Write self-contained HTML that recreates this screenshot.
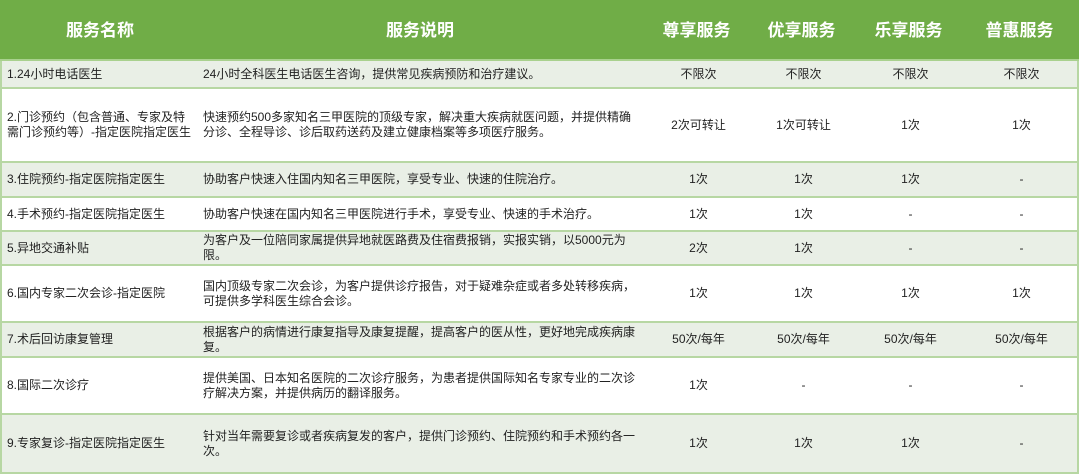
<!DOCTYPE html>
<html><head><meta charset="utf-8"><style>
*{margin:0;padding:0;box-sizing:border-box}
body{width:1080px;height:476px;background:#fff;font-family:"Liberation Sans","Noto Sans CJK SC",sans-serif;color:#222;position:relative;overflow:hidden}
.hd{position:absolute;left:0;top:0;width:1079px;height:61px;background:#70ad47;border-bottom:2px solid #a9d18e}
.hd div{position:absolute;top:0;height:61px;line-height:61px;color:#fff;font-weight:bold;font-size:17px;text-align:center}
.r{position:absolute;left:0;width:1079px;border-bottom:2px solid #b7d7a3;border-left:2px solid #b7d7a3;border-right:2px solid #b7d7a3;font-size:12px;line-height:15px}
.g{background:#e9efe6}
.r div{position:absolute;top:0;height:100%;display:flex;align-items:center}
.c1{left:5px;width:190px}
.c2{left:201px;width:440px}
.c3,.c4,.c5,.c6{justify-content:center;text-align:center}
.c3{left:645px;width:103px}.c4{left:748px;width:107px}.c5{left:855px;width:107px}.c6{left:962px;width:115px}
</style></head><body>
<div class="hd">
<div style="left:0;width:200px">服务名称</div>
<div style="left:200px;width:440px">服务说明</div>
<div style="left:645px;width:103px">尊享服务</div>
<div style="left:748px;width:107px">优享服务</div>
<div style="left:855px;width:107px">乐享服务</div>
<div style="left:962px;width:115px">普惠服务</div>
</div>

<div class="r g" style="top:61px;height:28px"><div class="c1">1.24小时电话医生</div><div class="c2">24小时全科医生电话医生咨询，提供常见疾病预防和治疗建议。</div><div class="c3">不限次</div><div class="c4">不限次</div><div class="c5">不限次</div><div class="c6">不限次</div></div>

<div class="r" style="top:89px;height:74px"><div class="c1">2.门诊预约（包含普通、专家及特<br>需门诊预约等）-指定医院指定医生</div><div class="c2">快速预约500多家知名三甲医院的顶级专家，解决重大疾病就医问题，并提供精确<br>分诊、全程导诊、诊后取药送药及建立健康档案等多项医疗服务。</div><div class="c3">2次可转让</div><div class="c4">1次可转让</div><div class="c5">1次</div><div class="c6">1次</div></div>

<div class="r g" style="top:163px;height:35px"><div class="c1">3.住院预约-指定医院指定医生</div><div class="c2">协助客户快速入住国内知名三甲医院，享受专业、快速的住院治疗。</div><div class="c3">1次</div><div class="c4">1次</div><div class="c5">1次</div><div class="c6">-</div></div>

<div class="r" style="top:198px;height:34px"><div class="c1">4.手术预约-指定医院指定医生</div><div class="c2">协助客户快速在国内知名三甲医院进行手术，享受专业、快速的手术治疗。</div><div class="c3">1次</div><div class="c4">1次</div><div class="c5">-</div><div class="c6">-</div></div>

<div class="r g" style="top:232px;height:34px"><div class="c1">5.异地交通补贴</div><div class="c2">为客户及一位陪同家属提供异地就医路费及住宿费报销，实报实销，以5000元为<br>限。</div><div class="c3">2次</div><div class="c4">1次</div><div class="c5">-</div><div class="c6">-</div></div>

<div class="r" style="top:266px;height:57px"><div class="c1">6.国内专家二次会诊-指定医院</div><div class="c2">国内顶级专家二次会诊，为客户提供诊疗报告，对于疑难杂症或者多处转移疾病，<br>可提供多学科医生综合会诊。</div><div class="c3">1次</div><div class="c4">1次</div><div class="c5">1次</div><div class="c6">1次</div></div>

<div class="r g" style="top:323px;height:35px"><div class="c1">7.术后回访康复管理</div><div class="c2">根据客户的病情进行康复指导及康复提醒，提高客户的医从性，更好地完成疾病康<br>复。</div><div class="c3">50次/每年</div><div class="c4">50次/每年</div><div class="c5">50次/每年</div><div class="c6">50次/每年</div></div>

<div class="r" style="top:358px;height:57px"><div class="c1">8.国际二次诊疗</div><div class="c2">提供美国、日本知名医院的二次诊疗服务，为患者提供国际知名专家专业的二次诊<br>疗解决方案，并提供病历的翻译服务。</div><div class="c3">1次</div><div class="c4">-</div><div class="c5">-</div><div class="c6">-</div></div>

<div class="r g" style="top:415px;height:59px"><div class="c1">9.专家复诊-指定医院指定医生</div><div class="c2">针对当年需要复诊或者疾病复发的客户，提供门诊预约、住院预约和手术预约各一<br>次。</div><div class="c3">1次</div><div class="c4">1次</div><div class="c5">1次</div><div class="c6">-</div></div>
</body></html>
